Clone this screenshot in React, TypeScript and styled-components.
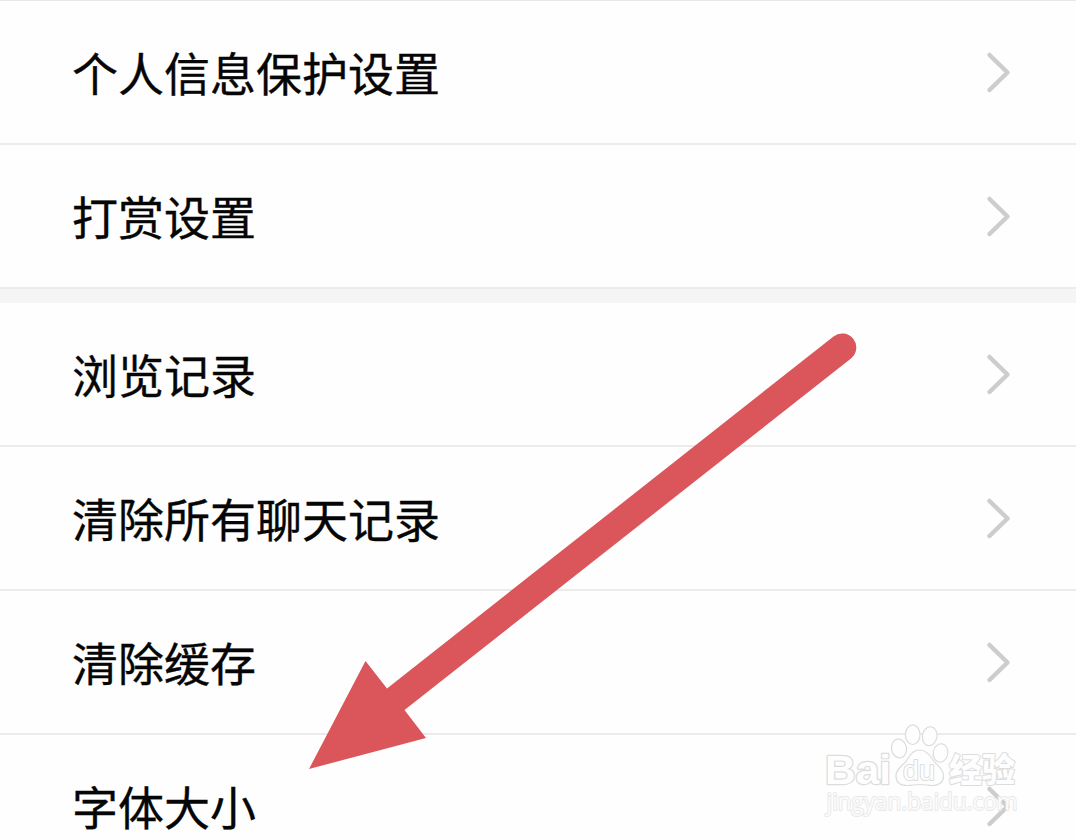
import React from "react";
import styled, { createGlobalStyle } from "styled-components";

const GlobalStyle = createGlobalStyle`
  body {
    margin: 0;
    background: #fefefe;
    overflow: hidden;
  }
`;

const groups: string[][] = [
	["个人信息保护设置", "打赏设置"],
	["浏览记录", "清除所有聊天记录", "清除缓存", "字体大小"],
];

const Chevron: React.FC = () => (
	<ChevronIcon viewBox="0 0 26 44">
		<path d="M3.5 4 L21.5 21.5 L3.5 39" />
	</ChevronIcon>
);

const Watermark: React.FC = () => (
	<WatermarkSvg viewBox="0 0 220 120">
		<ellipse cx="93" cy="38.5" rx="7.5" ry="9.5" transform="rotate(-10 93 38.5)" />
		<ellipse cx="106.7" cy="24.7" rx="7.3" ry="9.8" />
		<ellipse cx="123.7" cy="26.2" rx="7.3" ry="9.5" transform="rotate(10 123.7 26.2)" />
		<ellipse cx="134.5" cy="43" rx="7.3" ry="9.3" transform="rotate(10 134.5 43)" />
		<path d="M113.5 40 C107 40 104 45 101 50 C97 56 90 58 90 66 C90 73 95 75.5 101 75.5 C106 75.5 109 74.5 114 74.5 C119 74.5 122 75.5 127 75.5 C133 75.5 137.5 72 137.5 66 C137.5 58 131 56 127 50 C124 45 120 40 113.5 40 Z" />
		<text className="latin" x="19" y="74" textLength="66" lengthAdjust="spacingAndGlyphs">
			Bai
		</text>
		<text className="du" x="97" y="69.5" textLength="32" lengthAdjust="spacingAndGlyphs">
			du
		</text>
		<text className="cjk" x="143" y="71.5" textLength="66" lengthAdjust="spacingAndGlyphs">
			经验
		</text>
		<text className="url" x="20.5" y="100" textLength="191" lengthAdjust="spacingAndGlyphs">
			jingyan.baidu.com
		</text>
	</WatermarkSvg>
);

export default function App() {
	return (
		<Screen>
			<GlobalStyle />
			{groups.map((items, index) => (
				<Group key={index}>
					{items.map((label) => (
						<Row key={label}>
							<Label>{label}</Label>
							<Chevron />
						</Row>
					))}
				</Group>
			))}
			<Pointer viewBox="0 0 1076 840">
				<path d="M309 769 L365.5 661 L387 688.5 L833.5 336.5 A14 14 0 0 1 851 358.5 L404.5 710 L426 738 Z" />
			</Pointer>
			<Watermark />
		</Screen>
	);
}

const Screen = styled.main`
  position: relative;
  box-sizing: border-box;
  display: flex;
  flex-direction: column;
  gap: 14px;
  width: 1076px;
  height: 840px;
  border-top: 1px solid #e9e9e9;
  background: #f5f5f5;
  overflow: hidden;
`;

const Group = styled.section`
  flex-shrink: 0;
  background: #fefefe;
`;

const Row = styled.div`
  box-sizing: border-box;
  display: flex;
  align-items: center;
  justify-content: space-between;
  height: 144px;
  padding: 2px 64px 0 72px;
  border-bottom: 2px solid #ebebeb;
`;

const Label = styled.span`
  padding-bottom: 5px;
  font-family: "Noto Sans CJK SC", sans-serif;
  font-size: 46px;
  line-height: 68px;
  color: #060606;
  -webkit-text-stroke: 0.35px #060606;
`;

const ChevronIcon = styled.svg`
  width: 26px;
  height: 44px;

  path {
    fill: none;
    stroke: #cdcdcd;
    stroke-width: 4.5;
    stroke-linecap: round;
    stroke-linejoin: round;
  }
`;

const Pointer = styled.svg`
  position: absolute;
  top: -1px;
  left: 0;
  width: 1076px;
  height: 840px;
  fill: #db565b;
  pointer-events: none;
`;

const WatermarkSvg = styled.svg`
  position: absolute;
  top: 709px;
  left: 806px;
  width: 220px;
  height: 120px;
  fill: #fefefe;
  stroke: #dcdcdc;
  stroke-width: 1.2;
  stroke-linejoin: round;
  pointer-events: none;

  .latin {
    font: bold 40px "Liberation Sans", sans-serif;
    stroke-width: 2.4;
    paint-order: stroke;
  }

  .du {
    font: 27px "Liberation Sans", sans-serif;
    stroke-width: 1.8;
    paint-order: stroke;
  }

  .cjk {
    font: 900 33px "Noto Sans CJK SC", sans-serif;
    stroke-width: 2;
    paint-order: stroke;
  }

  .url {
    font: 23px "Open Sans", sans-serif;
    fill: rgba(254, 254, 254, 0.9);
    stroke: #e8e8e8;
    stroke-width: 1.8;
    paint-order: stroke;
  }
`;
